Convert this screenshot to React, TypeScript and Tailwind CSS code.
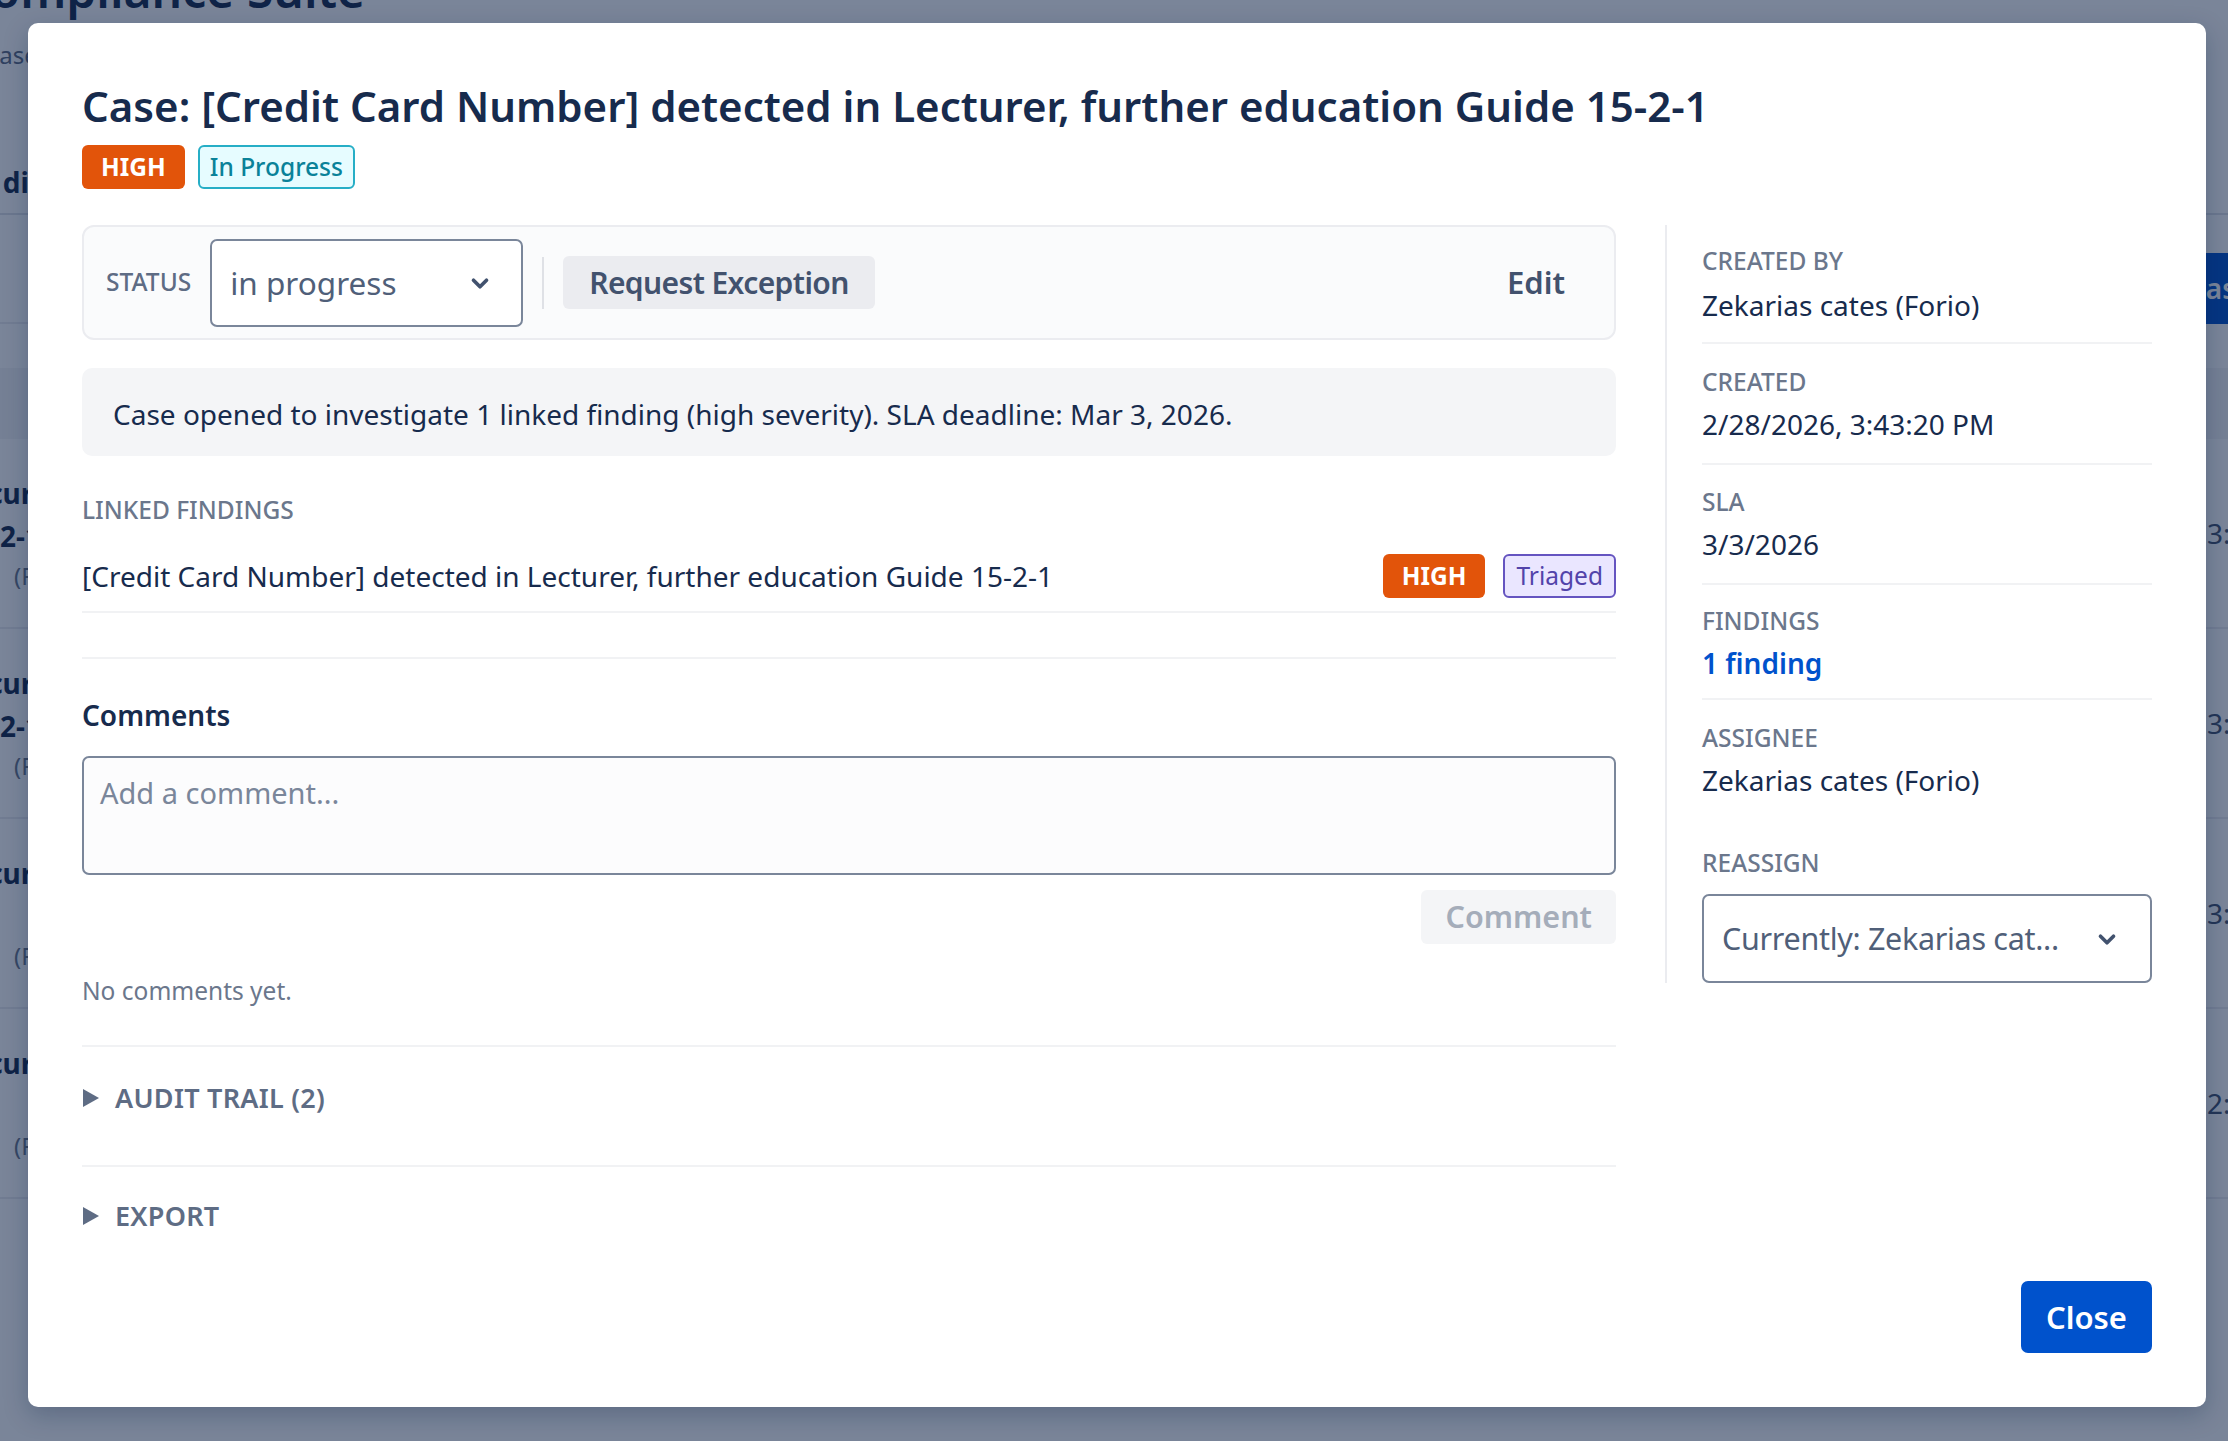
import React from 'react';

const Chevron = ({ className = '' }: { className?: string }) => (
  <svg viewBox="0 0 24 24" width={26} height={26} className={className} fill="none" stroke="currentColor" strokeWidth={3.4} strokeLinecap="round" strokeLinejoin="round">
    <path d="M6 9.5l6 6 6-6" />
  </svg>
);

const Caret = () => (
  <svg viewBox="0 0 18 20" width={18} height={20} className="text-[#5e6c84]" fill="currentColor">
    <path d="M1 1l16 9-16 9z" />
  </svg>
);

const MetaItem = ({ label, children, className = '' }: { label: string; children: React.ReactNode; className?: string }) => (
  <div className={`border-b-2 border-[#f1f2f4] pb-[18px] ${className}`}>
    <div className="text-[24.5px] leading-[36px] font-medium uppercase text-[#6b778c]">{label}</div>
    <div className="mt-[3px] text-[28px] leading-[42px] text-[#172b4d]">{children}</div>
  </div>
);

const bgRows = [
  { a: 'Secur', b: '2-1 Policy', time: '3:43:20 PM' },
  { a: 'Secur', b: '2-1 Policy', time: '3:43:18 PM' },
  { a: 'Security', b: '', time: '3:42:57 PM' },
  { a: 'Secur', b: '', time: '2:31:04 PM' },
];

// Page that sits behind the dialog; only its edges show
const BackgroundPage = () => (
  <div className="w-[2228px]">
    <h1 className="-mt-[34px] -ml-[40px] text-[48px] leading-[48px] font-semibold text-[#172b4d] whitespace-nowrap">
      Compliance Suite
    </h1>
    <p className="mt-[23px] -ml-[16px] text-[24px] leading-[36px] text-[#5e6c84]">Cases and findings</p>
    <div className="mt-[88px] pb-[10px] border-b-2 border-[#dfe1e6]">
      <h2 className="-ml-[70px] text-[28px] leading-[42px] font-bold text-[#172b4d]">Case directory</h2>
    </div>
    <div className="mt-[38px] h-[71px] flex justify-end border-b-2 border-[#ebecf0]">
      <div className="w-[40px] h-[71px] overflow-hidden whitespace-nowrap bg-[#0052cc] text-white text-[28px] font-semibold leading-[71px]">
        Cases
      </div>
    </div>
    <div className="mt-[44px] h-[71px] bg-[#f4f5f7]" />
    {bgRows.map((r, i) => (
      <div key={i} className="h-[190px] flex items-center justify-between border-b-2 border-[#ebecf0]">
        <div className="-ml-[44px]">
          <div className="text-[28px] leading-[43px] font-bold text-[#172b4d] whitespace-nowrap">{r.a}</div>
          <div className="text-[28px] leading-[43px] font-bold text-[#172b4d] ml-[44px] h-[43px]">{r.b}</div>
          <div className="ml-[58px] text-[24px] leading-[36px] text-[#6b778c]">(Forio)</div>
        </div>
        <div className="w-[21px] overflow-hidden whitespace-nowrap text-[28px] text-[#42526e]">{r.time}</div>
      </div>
    ))}
  </div>
);

export default function App() {
  return (
    <div className="relative w-[2228px] h-[1441px] overflow-hidden bg-white font-['Noto_Sans',sans-serif]">
      <BackgroundPage />
      <div className="absolute inset-0 bg-[rgba(9,30,66,0.54)]" />

      <div className="absolute left-[28px] top-[23px] w-[2178px] h-[1384px] bg-white rounded-[10px] shadow-[0_8px_24px_rgba(9,30,66,0.25)] p-[54px] flex flex-col">
        <h1 className="mt-[3px] text-[42px] leading-[52px] font-semibold text-[#172b4d] whitespace-nowrap">
          Case: [Credit Card Number] detected in Lecturer, further education Guide 15-2-1
        </h1>
        <div className="mt-[13px] flex gap-[13px]">
          <span className="h-[44px] px-[19px] flex items-center rounded-[6px] bg-[#e2540a] text-white text-[24.5px] font-bold">HIGH</span>
          <span className="h-[44px] px-[10px] flex items-center rounded-[6px] border-2 border-[#26aec6] bg-[#e6fcff] text-[#0a8299] text-[24.5px] font-medium">In Progress</span>
        </div>

        <div className="mt-[36px] flex items-start gap-[49px]">
          {/* main column */}
          <div className="w-[1534px] shrink-0 flex flex-col">
            <div className="h-[115px] flex items-center border-2 border-[#ebecf0] bg-[#fafbfc] rounded-[12px] pl-[22px] pr-[22px]">
              <span className="text-[24.5px] font-medium uppercase text-[#5e6c84]">Status</span>
              <div className="ml-[19px] w-[313px] h-[88px] flex items-center justify-between border-2 border-[#7a869a] rounded-[7px] bg-white pl-[18px] pr-[28px] text-[31.5px] text-[#505f79]">
                <span>in progress</span>
                <Chevron className="text-[#42526e]" />
              </div>
              <div className="ml-[19px] w-[2px] h-[52px] bg-[#dfe1e6]" />
              <button className="ml-[19px] h-[53px] px-[26px] rounded-[6px] bg-[#ebecf0] text-[30px] tracking-[-0.02em] font-semibold text-[#42526e]">
                Request Exception
              </button>
              <button className="ml-auto h-[53px] px-[27px] rounded-[6px] text-[31px] font-semibold text-[#42526e]">Edit</button>
            </div>

            <div className="mt-[28px] bg-[#f4f5f7] rounded-[10px] px-[31px] pt-[25px] pb-[21px] text-[28px] leading-[42px] text-[#172b4d]">
              Case opened to investigate 1 linked finding (high severity). SLA deadline: Mar 3, 2026.
            </div>

            <div className="mt-[36px] text-[24.5px] leading-[36px] font-medium uppercase text-[#6b778c]">Linked Findings</div>
            <div className="mt-[13px] py-[13px] flex items-center border-b-2 border-[#f1f2f4]">
              <span className="text-[28px] text-[#172b4d]">[Credit Card Number] detected in Lecturer, further education Guide 15-2-1</span>
              <span className="ml-auto h-[44px] px-[19px] flex items-center rounded-[6px] bg-[#e2540a] text-white text-[24.5px] font-bold">HIGH</span>
              <span className="ml-[18px] h-[44px] px-[11px] flex items-center rounded-[6px] border-2 border-[#6554c0] bg-[#eae6ff] text-[#5243aa] text-[24.5px]">Triaged</span>
            </div>
            <div className="h-[46px] border-b-2 border-[#f1f2f4]" />

            <div className="pb-[36px] border-b-2 border-[#f1f2f4] flex flex-col">
              <h3 className="mt-[35px] text-[28px] leading-[42px] font-semibold text-[#172b4d]">Comments</h3>
              <textarea
                placeholder="Add a comment..."
                className="mt-[20px] h-[119px] w-full resize-none border-2 border-[#7a869a] rounded-[7px] bg-[#fcfcfd] px-[16px] pt-[14px] pb-[10px] text-[29px] leading-[42px] text-[#172b4d] placeholder:text-[#7a869a] outline-none"
              />
              <button className="mt-[15px] self-end h-[54px] px-[24px] rounded-[6px] bg-[#f4f5f7] text-[#a5adba] text-[30.5px] font-semibold">
                Comment
              </button>
              <p className="mt-[29px] text-[24.5px] leading-[36px] text-[#6b778c]">No comments yet.</p>
            </div>

            <div className="pt-[30px] pb-[46px] border-b-2 border-[#f1f2f4] flex items-center gap-[15px]">
              <Caret />
              <span className="text-[27px] leading-[42px] font-semibold uppercase tracking-[0.01em] text-[#5e6c84]">Audit Trail (2)</span>
            </div>
            <div className="pt-[28px] flex items-center gap-[15px]">
              <Caret />
              <span className="text-[27px] leading-[42px] font-semibold uppercase tracking-[0.01em] text-[#5e6c84]">Export</span>
            </div>
          </div>

          {/* side column */}
          <div className="flex-1 border-l-2 border-[#ebecf0] pl-[35px]">
            <MetaItem label="Created by" className="pt-[18px]">
              <span className="block pt-[2px] -mb-[2px]">Zekarias cates (Forio)</span>
            </MetaItem>
            <MetaItem label="Created" className="pt-[20px]">2/28/2026, 3:43:20 PM</MetaItem>
            <MetaItem label="SLA" className="pt-[19px]">3/3/2026</MetaItem>
            <div className="pt-[18px] pb-[14px] border-b-2 border-[#f1f2f4]">
              <div className="text-[24.5px] leading-[36px] font-medium uppercase text-[#6b778c]">Findings</div>
              <a className="mt-[3px] block text-[28px] leading-[42px] font-semibold text-[#0052cc]">1 finding</a>
            </div>
            <div className="pt-[20px]">
              <div className="text-[24.5px] leading-[36px] font-medium uppercase text-[#6b778c]">Assignee</div>
              <div className="mt-[3px] text-[28px] leading-[42px] text-[#172b4d]">Zekarias cates (Forio)</div>
            </div>
            <div className="mt-[44px]">
              <div className="text-[24.5px] leading-[36px] font-medium uppercase text-[#6b778c]">Reassign</div>
              <div className="mt-[13px] h-[89px] flex items-center justify-between border-2 border-[#7a869a] rounded-[7px] bg-white pl-[18px] pr-[30px] text-[30.5px] tracking-[-0.01em] text-[#505f79]">
                <span className="whitespace-nowrap">Currently: Zekarias cat...</span>
                <Chevron className="text-[#42526e]" />
              </div>
            </div>
          </div>
        </div>

        <div className="mt-auto flex justify-end">
          <button className="h-[72px] px-[25px] rounded-[7px] bg-[#0052cc] text-white text-[31px] font-semibold">Close</button>
        </div>
      </div>
    </div>
  );
}
